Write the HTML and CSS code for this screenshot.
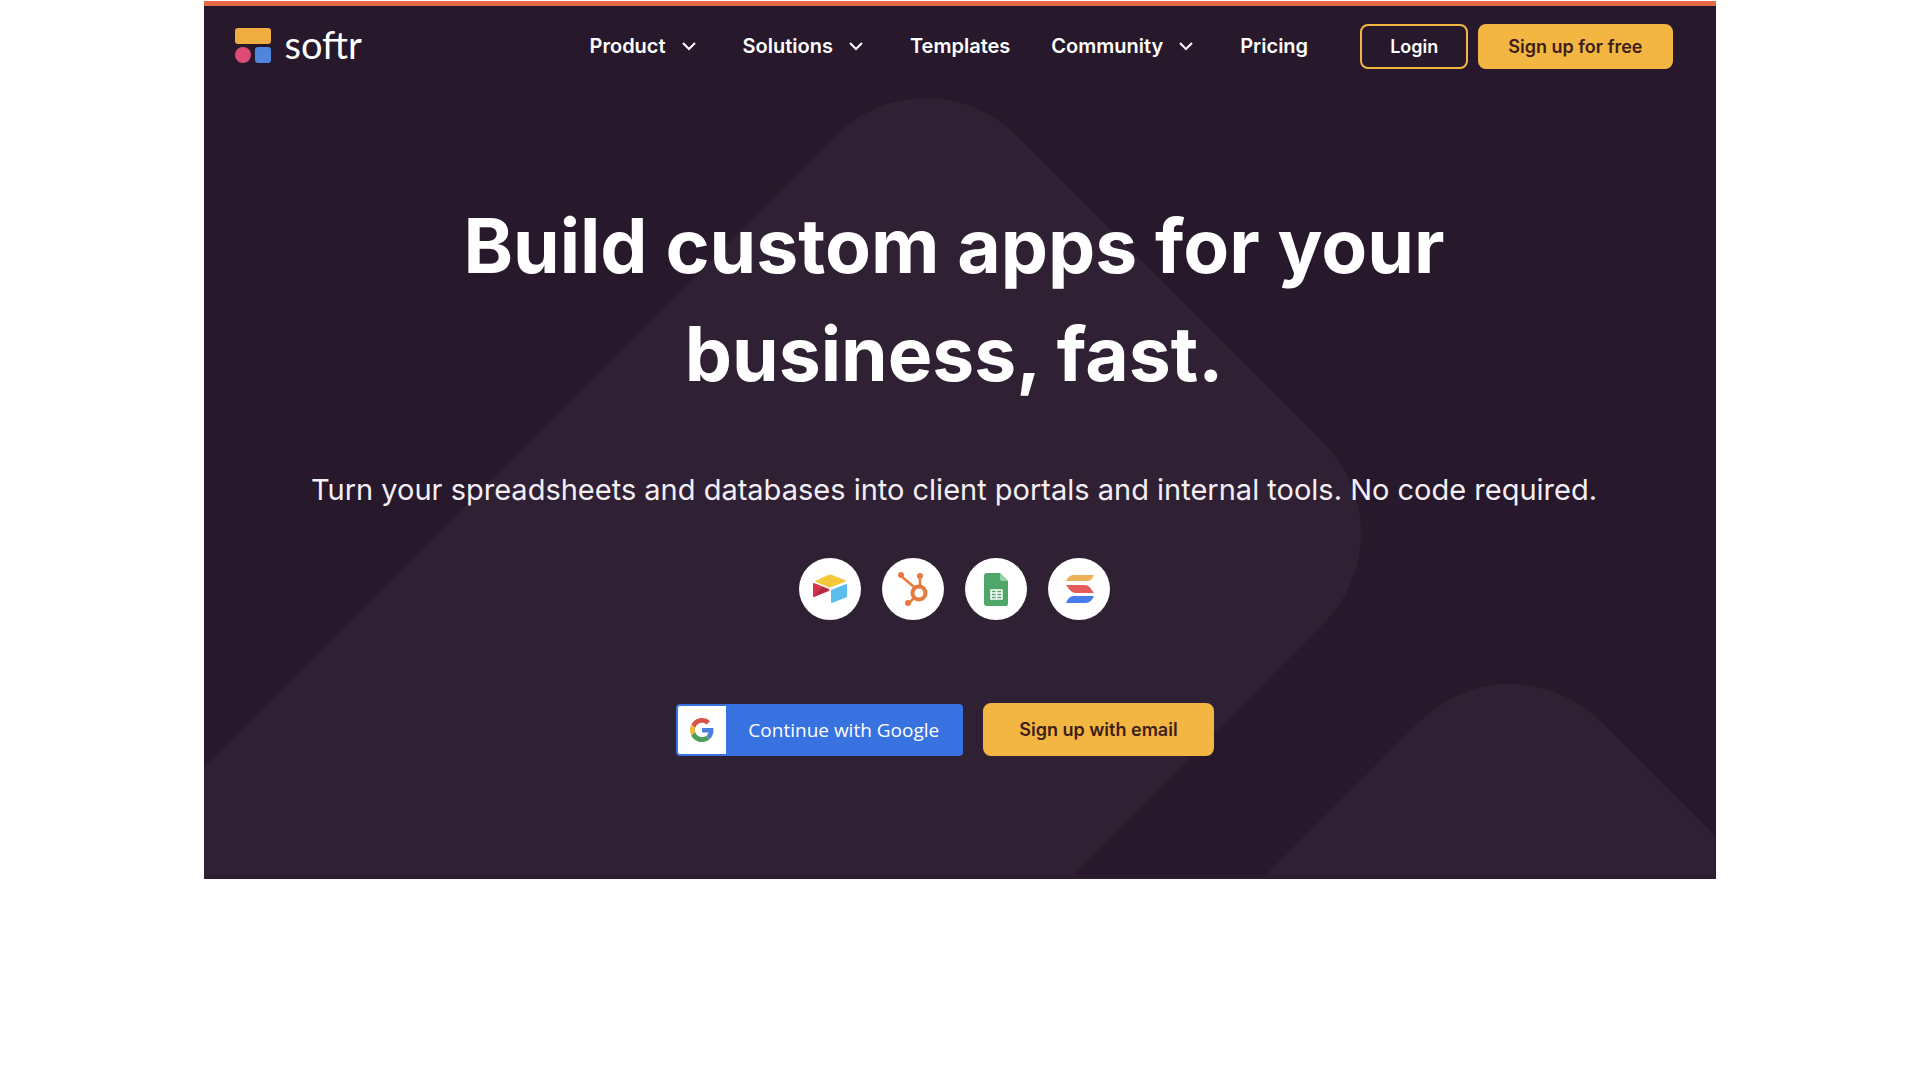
FILE: index.html
```
<!DOCTYPE html>
<html lang="en">

<head>
  <meta charset="utf-8">
  <meta name="viewport" content="width=device-width, initial-scale=1">
  <title>Softr - Build custom apps for your business, fast.</title>
  <link rel="stylesheet" href="styles.css">
</head>

<body>
  <div class="page">
    <svg class="backdrop" viewBox="0 0 1511 873" preserveAspectRatio="xMidYMin slice" aria-hidden="true">
      <path d="M0 761 L631 130 A128 128 0 0 1 813 130 L1119 436 A128 128 0 0 1 1119 618 L864 873 H0 Z" />
      <path d="M1058 873 L1215 716 A128 128 0 0 1 1397 716 L1511 830 V873 Z" />
    </svg>

    <header class="navbar">
      <a class="logo" href="#">
        <svg width="36" height="36" viewBox="0 0 36 36" aria-hidden="true">
          <rect x="0" y="0" width="36" height="16" rx="3" fill="#efad42" />
          <circle cx="8" cy="27" r="8" fill="#de4b77" />
          <rect x="20" y="19" width="16" height="16" rx="3" fill="#4d86db" />
        </svg>
        <span>softr</span>
      </a>
      <nav class="menu">
        <a href="#">Product <svg class="chevron" viewBox="0 0 14 10"><path d="M1 2 L7 8 L13 2" /></svg></a>
        <a href="#">Solutions <svg class="chevron" viewBox="0 0 14 10"><path d="M1 2 L7 8 L13 2" /></svg></a>
        <a href="#">Templates</a>
        <a href="#">Community <svg class="chevron" viewBox="0 0 14 10"><path d="M1 2 L7 8 L13 2" /></svg></a>
        <a href="#">Pricing</a>
      </nav>
      <div class="account">
        <a class="btn btn-outline" href="#">Login</a>
        <a class="btn btn-yellow" href="#">Sign up for free</a>
      </div>
    </header>

    <main class="hero">
      <h1>Build custom apps for your<br>business, fast.</h1>
      <p>Turn your spreadsheets and databases into client portals and internal tools. No code required.</p>

      <ul class="sources">
        <li>
          <svg viewBox="0 0 62 62" role="img" aria-label="Airtable">
            <path fill="#f5c83c" d="M16 23 L29 17 Q31 16 33 17 L46 22 Q47 23 46 24 L32 29 Q31 30 29 29 L17 24 Z" />
            <path fill="#d4354c" d="M14 26 Q14 25 15 25 L30 31 Q31 32 30 33 L15 39 Q14 39 14 38 Z" />
            <path fill="#b02a48" d="M24 29 L30 32 L14 39 Z" />
            <path fill="#5bbdea" d="M32 32 L47 26 Q48 26 48 27 V39 L33 45 Q32 45 32 44 Z" />
          </svg>
        </li>
        <li>
          <svg viewBox="0 0 62 62" role="img" aria-label="HubSpot">
            <g fill="none" stroke="#e67a40">
              <circle cx="37" cy="35" r="6.500" stroke-width="4" />
              <path stroke-width="2.500" d="M19 18 L32 29 M38 19 V28 M32 40 L27 45" />
            </g>
            <g fill="#e67a40">
              <circle cx="19" cy="17" r="3" />
              <circle cx="38" cy="18" r="3" />
              <circle cx="26" cy="45" r="3" />
            </g>
          </svg>
        </li>
        <li>
          <svg viewBox="0 0 62 62" role="img" aria-label="Google Sheets">
            <path fill="#4ea668" d="M22 15 H35 L43 23 V45 Q43 48 41 48 H22 Q19 48 19 45 V18 Q19 15 22 15 Z" />
            <path fill="#97cfa8" d="M35 15 L43 23 H37 Q35 23 35 21 Z" />
            <path fill="none" stroke="#fff" stroke-width="1.500" d="M26 32 H37 V41 H26 Z M31.500 32 V41 M26 35 H37 M26 38 H37" />
          </svg>
        </li>
        <li>
          <svg viewBox="0 0 62 62" role="img" aria-label="SmartSuite">
            <path fill="#eeb058" d="M25 17 H46 Q44 23 39 23 H18 Q20 18 25 17 Z" />
            <path fill="#e55a5c" d="M18 27 H36 Q41 27 43 31 L46 35 H28 Q24 35 21 31 Z" />
            <path fill="#487ced" d="M25 38 H46 Q43 45 38 45 H18 Q20 39 25 38 Z" />
          </svg>
        </li>
      </ul>

      <div class="signup">
        <button class="google" type="button">
          <span class="google-icon">
            <svg width="24" height="24" viewBox="0 0 48 48" aria-hidden="true">
              <path fill="#d9534a" d="M24 9.500c3.540 0 6.710 1.220 9.210 3.600l6.850-6.850C35.900 2.380 30.470 0 24 0 14.620 0 6.510 5.380 2.560 13.220l7.980 6.190C12.430 13.720 17.740 9.500 24 9.500z" />
              <path fill="#4d7fe0" d="M46.980 24.550c0-1.570-.15-3.090-.38-4.550H24v9.020h12.940c-.58 2.960-2.260 5.480-4.780 7.180l7.730 6c4.510-4.180 7.090-10.360 7.090-17.650z" />
              <path fill="#f0b93c" d="M10.530 28.590c-.48-1.450-.76-2.990-.76-4.590s.27-3.140.76-4.590l-7.980-6.190C.92 16.460 0 20.120 0 24s.92 7.540 2.560 10.780l7.970-6.190z" />
              <path fill="#4c9f5b" d="M24 48c6.480 0 11.930-2.130 15.890-5.810l-7.730-6c-2.150 1.450-4.920 2.300-8.160 2.300-6.260 0-11.570-4.220-13.470-9.910l-7.980 6.190C6.510 42.620 14.620 48 24 48z" />
            </svg>
          </span>
          <span class="google-label">Continue with Google</span>
        </button>
        <a class="btn btn-yellow btn-email" href="#">Sign up with email</a>
      </div>
    </main>
  </div>
</body>

</html>
```
FILE: styles.css
```
* {
  box-sizing: border-box;
}

body {
  margin: 0;
  background-color: #fff;
  font-family: Inter, "Liberation Sans", sans-serif;
}

a {
  color: inherit;
  text-decoration: none;
}

.page {
  position: relative;
  width: 78.7%;
  min-width: 1400px;
  margin: 1px auto 0;
  border-top: 5px solid #e56947;
  border-bottom: 4px solid #2b1d2e;
  background-color: #27182b;
  color: #fff;
  overflow: hidden;
}

.backdrop {
  position: absolute;
  top: 0;
  left: 0;
  width: 100%;
  height: 100%;
  fill: #302033;
}

.navbar {
  position: relative;
  display: flex;
  align-items: center;
  height: 80px;
  padding: 0 43px 0 31px;
}

.logo {
  display: flex;
  align-items: center;
  gap: 13px;
  margin-right: auto;
  font-family: Lato, sans-serif;
  font-size: 38px;
  line-height: 36px;
}

.logo span {
  padding-bottom: 4px;
}

.menu {
  display: flex;
  gap: 41px;
  margin-right: 52px;
  font-size: 20px;
  font-weight: 600;
}

.menu a {
  display: flex;
  align-items: center;
  gap: 16px;
}

.chevron {
  width: 14px;
  height: 10px;
  margin-right: 6px;
  fill: none;
  stroke: #fff;
  stroke-width: 2;
}

.account {
  display: flex;
  gap: 10px;
}

.btn {
  display: flex;
  align-items: center;
  justify-content: center;
  height: 45px;
  padding: 0 28px;
  border: 2px solid #f4b642;
  border-radius: 8px;
  font-size: 18px;
  font-weight: 600;
}

.btn-yellow {
  background-color: #f4b642;
  color: #3b2118;
}

.hero {
  position: relative;
  display: flex;
  flex-direction: column;
  align-items: center;
  padding: 106px 0 119px;
  margin-right: 12px;
}

.hero h1 {
  margin: 0;
  font-size: 75px;
  font-weight: 700;
  line-height: 108px;
  text-align: center;
}

.hero p {
  margin: 58px 0 0;
  color: #f3eff5;
  font-size: 29px;
  line-height: 48px;
}

.sources {
  display: flex;
  gap: 21px;
  margin: 44px 0 0;
  padding: 0;
  list-style: none;
}

.sources li {
  width: 62px;
  height: 62px;
  border-radius: 50%;
  background-color: #fff;
}

.signup {
  display: flex;
  align-items: center;
  gap: 20px;
  margin-top: 83px;
  margin-right: 18px;
}

.google {
  display: flex;
  align-items: center;
  height: 52px;
  padding: 2px;
  border: 0;
  border-radius: 4px;
  background-color: #3871e0;
  color: #fff;
  font-family: "Open Sans", sans-serif;
  font-size: 19px;
  font-weight: 500;
}

.google-icon {
  display: flex;
  align-items: center;
  justify-content: center;
  width: 48px;
  height: 48px;
  border-radius: 2px 0 0 2px;
  background-color: #fff;
}

.google-label {
  padding: 0 22px;
}

.btn-email {
  height: 53px;
  padding: 0 34px;
}
```
